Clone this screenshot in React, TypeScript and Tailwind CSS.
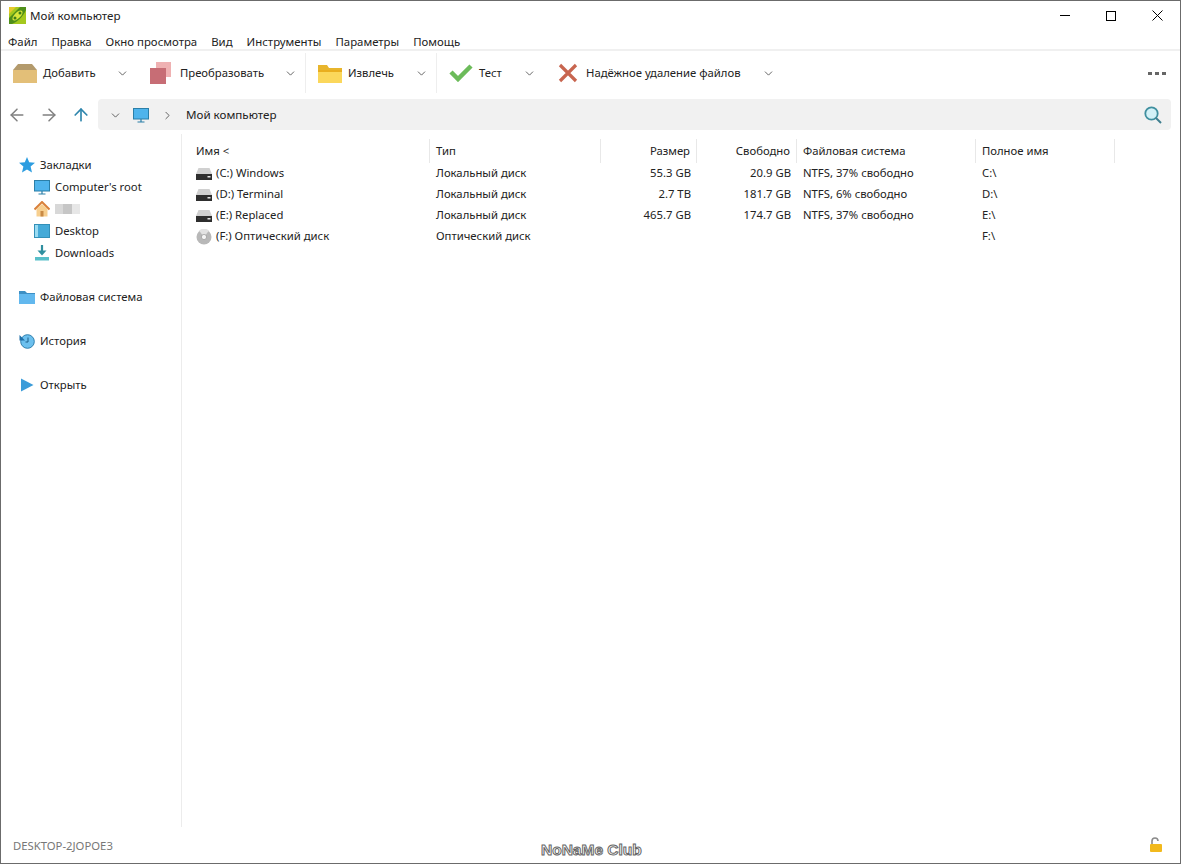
import { ArrowLeft, ArrowRight, ArrowUp, ChevronDown, ChevronRight } from "lucide-react";
import type { ReactNode } from "react";

const Pea = () => (
  <svg width="17" height="17" viewBox="0 0 17 17">
    <rect width="17" height="17" fill="#a4c81e" />
    <path d="M0 17V11L11 0h6v3C14 10 8 15 3 17z" fill="#4f8f1a" />
    <ellipse cx="8.5" cy="8.5" rx="6.5" ry="3" transform="rotate(-45 8.5 8.5)" fill="#d8e63a" />
    <circle cx="6" cy="11" r="1.5" fill="#3f7d17" />
    <circle cx="11" cy="6" r="1.5" fill="#3f7d17" />
    <path d="M0 0h7L0 7z" fill="#e6c92b" />
  </svg>
);

const BoxIcon = () => (
  <svg width="24" height="19" viewBox="0 0 24 19">
    <path d="M0 6 5 0h14l5 6z" fill="#b39a6c" />
    <rect y="6" width="24" height="13" fill="#e3bf78" />
  </svg>
);

const ConvertIcon = () => (
  <svg width="22" height="22" viewBox="0 0 22 22">
    <rect x="6" width="15" height="15" fill="#efb1b2" />
    <rect y="6" width="16" height="16" fill="#c76d75" />
  </svg>
);

const FolderIcon = () => (
  <svg width="24" height="19" viewBox="0 0 24 19">
    <path d="M0 1h9l2 3h13v3H0z" fill="#e8b52c" />
    <rect y="6" width="24" height="13" fill="#fbd75b" />
    <rect y="6" width="24" height="2" fill="#e9ae1f" />
  </svg>
);

const CheckIcon = () => (
  <svg width="24" height="18" viewBox="0 0 24 18">
    <path d="M2 8l7 7L22 2" fill="none" stroke="#6cbb5a" strokeWidth="4.5" />
  </svg>
);

const CrossIcon = () => (
  <svg width="20" height="20" viewBox="0 0 20 20">
    <path d="M2 2l16 16M18 2 2 18" fill="none" stroke="#c8654f" strokeWidth="3.2" />
  </svg>
);

const Monitor = () => (
  <svg width="16" height="16" viewBox="0 0 16 16">
    <rect x="0.5" y="1.5" width="15" height="10.5" fill="#4fb4ec" stroke="#2b7fa8" />
    <path d="M8 12v2.5M4.5 15h7" stroke="#2b7fa8" strokeWidth="1.2" />
  </svg>
);

const HomeIcon = () => (
  <svg width="16" height="16" viewBox="0 0 16 16">
    <path d="M2.5 8v7.5h11V8L8 3z" fill="#f7cf8f" />
    <path d="M0.5 8.5 8 1l7.5 7.5" fill="none" stroke="#d9803a" strokeWidth="2" />
    <rect x="6.5" y="10" width="3" height="5.5" fill="#c98a45" />
  </svg>
);

const DesktopIcon = () => (
  <svg width="16" height="14" viewBox="0 0 16 14">
    <rect x="0.5" y="0.5" width="15" height="13" fill="#45aad8" stroke="#3390b8" />
    <rect x="1" y="1" width="3" height="12" fill="#9adbf2" />
  </svg>
);

const DownloadIcon = () => (
  <svg width="16" height="16" viewBox="0 0 16 16">
    <path d="M8 0v8" stroke="#2f8f9f" strokeWidth="2.2" />
    <path d="M3.5 5.5 8 10.5l4.5-5z" fill="#2f8f9f" />
    <rect x="1" y="12" width="14" height="3.5" fill="#58bfc9" />
  </svg>
);

const StarIcon = () => (
  <svg width="16" height="16" viewBox="0 0 16 16">
    <path d="M8 0l2.2 5.3L16 5.8l-4.4 3.7L13 15.5 8 12.4l-5 3.1 1.4-6L0 5.8l5.8-.5z" fill="#2d9de0" />
  </svg>
);

const BlueFolder = () => (
  <svg width="16" height="13" viewBox="0 0 16 13">
    <path d="M0 0h6l2 2h8v2H0z" fill="#3d8fc4" />
    <rect y="3" width="16" height="10" fill="#62b8ee" />
  </svg>
);

const HistoryIcon = () => (
  <svg width="16" height="16" viewBox="0 0 16 16">
    <circle cx="8.5" cy="8.5" r="6.8" fill="#6cc0ee" stroke="#2d7fae" />
    <path d="M9 4.5V9H6.5" fill="none" stroke="#1d5f8a" />
    <path d="M0.5 2 6 7.5H0.5z" fill="#1f6fa8" />
  </svg>
);

const PlayIcon = () => (
  <svg width="16" height="16" viewBox="0 0 16 16">
    <path d="M2 1.5 14.5 8 2 14.5z" fill="#3b9cd9" />
  </svg>
);

const DriveIcon = () => (
  <svg width="16" height="12" viewBox="0 0 16 12">
    <path d="M2.5 0h11L16 6H0z" fill="#d0d0d0" />
    <rect y="6" width="16" height="6" fill="#2e2e2e" />
    <rect x="11.5" y="8" width="3" height="1.5" fill="#e5e5e5" />
  </svg>
);

const DiscIcon = () => (
  <svg width="16" height="16" viewBox="0 0 16 16">
    <circle cx="8" cy="8" r="7.5" fill="#b8b8b8" />
    <path d="M8 8 3 1.5A8 8 0 0 1 13 1.5z" fill="#e2e2e2" />
    <circle cx="8" cy="8" r="2.6" fill="#f5f5f5" stroke="#8a8a8a" strokeWidth="0.6" />
  </svg>
);

const LockIcon = () => (
  <svg width="14" height="15" viewBox="0 0 14 15" className="mb-[4px]">
    <path d="M3 7V4a3 3 0 0 1 6 0" fill="none" stroke="#8b8b8b" strokeWidth="1.6" />
    <rect x="1" y="7" width="12" height="8" rx="1" fill="#f2b91d" />
  </svg>
);

const SearchIcon = () => (
  <svg width="18" height="18" viewBox="0 0 18 18" className="ml-auto">
    <circle cx="7.5" cy="7.5" r="6.2" fill="#d3f1f7" stroke="#3f8f9f" strokeWidth="1.8" />
    <path d="M12 12l5 5" stroke="#3f7f8f" strokeWidth="2" />
  </svg>
);

const menu = ["Файл", "Правка", "Окно просмотра", "Вид", "Инструменты", "Параметры", "Помощь"];

const Tool = ({ icon, label, iconW, gap, textW }: { icon: ReactNode; label: string; iconW: string; gap: string; textW: string }) => (
  <div className="flex items-center">
    <div className={`flex justify-center ${iconW}`}>{icon}</div>
    <span className={`${gap} ${textW} whitespace-nowrap`}>{label}</span>
    <ChevronDown size={13} strokeWidth={1.5} className="ml-[20px] text-[#444]" />
  </div>
);

const Bookmark = ({ icon, children }: { icon: ReactNode; children: ReactNode }) => (
  <div className="flex h-[22px] items-center pl-[33px]">
    <div className="flex w-[16px] justify-center">{icon}</div>
    <div className="ml-[5px]">{children}</div>
  </div>
);

const Group = ({ icon, label }: { icon: ReactNode; label: string }) => (
  <div className="flex h-[22px] items-center pl-[18px]">
    <div className="flex w-[16px] justify-center">{icon}</div>
    <span className="ml-[5px]">{label}</span>
  </div>
);

const rows = [
  { icon: <DriveIcon />, name: "(C:) Windows", type: "Локальный диск", size: "55.3 GB", free: "20.9 GB", fs: "NTFS, 37% свободно", full: "C:\\" },
  { icon: <DriveIcon />, name: "(D:) Terminal", type: "Локальный диск", size: "2.7 TB", free: "181.7 GB", fs: "NTFS, 6% свободно", full: "D:\\" },
  { icon: <DriveIcon />, name: "(E:) Replaced", type: "Локальный диск", size: "465.7 GB", free: "174.7 GB", fs: "NTFS, 37% свободно", full: "E:\\" },
  { icon: <DiscIcon />, name: "(F:) Оптический диск", type: "Оптический диск", size: "", free: "", fs: "", full: "F:\\" },
];

const headCell = "flex h-[24px] items-center border-r border-[#e8e8e8] px-[6px]";

export default function App() {
  return (
    <div className="relative flex h-[864px] w-[1181px] flex-col overflow-hidden border border-[#6b6b6b] bg-white text-[11.3px] text-[#222] [font-family:'Noto_Sans',sans-serif]">
      {/* title bar */}
      <div className="flex h-[29px] shrink-0 items-center pl-[8px] text-[11.6px]">
        <Pea />
        <span className="ml-[4px]">Мой компьютер</span>
        <div className="ml-auto flex h-full items-center">
          <div className="flex w-[46px] justify-center">
            <div className="h-[1px] w-[10px] bg-black" />
          </div>
          <div className="flex w-[46px] justify-center">
            <div className="h-[10px] w-[10px] border border-black" />
          </div>
          <div className="flex w-[46px] justify-center">
            <svg width="11" height="11" viewBox="0 0 11 11">
              <path d="M.5.5l10 10M10.5.5l-10 10" stroke="#000" />
            </svg>
          </div>
        </div>
      </div>

      {/* menu */}
      <div className="flex h-[21px] shrink-0 items-center gap-[14px] border-b-2 border-[#f0f0f0] pl-[7px] pt-[5px] text-[11.4px]">
        {menu.map((m) => (
          <span key={m}>{m}</span>
        ))}
      </div>

      {/* toolbar */}
      <div className="flex h-[44px] shrink-0 items-center pl-[11px] pr-[14px]">
        <Tool icon={<BoxIcon />} label="Добавить" iconW="w-[26px]" gap="ml-[5px]" textW="w-[53px]" />
        <div className="w-[21px]" />
        <Tool icon={<ConvertIcon />} label="Преобразовать" iconW="w-[22px]" gap="ml-[8px]" textW="w-[84px]" />
        <div className="ml-[8px] h-[40px] w-px bg-[#eeeeee]" />
        <div className="w-[11px]" />
        <Tool icon={<FolderIcon />} label="Извлечь" iconW="w-[26px]" gap="ml-[5px]" textW="w-[47px]" />
        <div className="ml-[8px] h-[40px] w-px bg-[#eeeeee]" />
        <div className="w-[11px]" />
        <Tool icon={<CheckIcon />} label="Тест" iconW="w-[26px]" gap="ml-[5px]" textW="w-[24px]" />
        <div className="w-[21px]" />
        <Tool icon={<CrossIcon />} label="Надёжное удаление файлов" iconW="w-[22px]" gap="ml-[7px]" textW="w-[156px]" />
        <div className="ml-auto flex gap-[3px]">
          <div className="h-[3px] w-[4px] bg-[#666]" />
          <div className="h-[3px] w-[4px] bg-[#666]" />
          <div className="h-[3px] w-[4px] bg-[#666]" />
        </div>
      </div>

      {/* address bar */}
      <div className="mt-[4px] flex h-[31px] shrink-0 items-center pl-[6px] pr-[9px] text-[11.6px]">
        <ArrowLeft size={20} strokeWidth={1.8} className="text-[#808080]" />
        <ArrowRight size={20} strokeWidth={1.8} className="ml-[12px] text-[#808080]" />
        <ArrowUp size={20} strokeWidth={2} className="ml-[12px] text-[#2f86ad]" />
        <div className="ml-[7px] flex h-full flex-1 items-center rounded-[4px] bg-[#f1f1f1] pl-[11px] pr-[9px] pt-[1px]">
          <ChevronDown size={13} strokeWidth={1.5} className="text-[#444]" />
          <div className="ml-[11px]">
            <Monitor />
          </div>
          <ChevronRight size={13} strokeWidth={1.5} className="ml-[12px] text-[#444]" />
          <span className="ml-[12px]">Мой компьютер</span>
          <SearchIcon />
        </div>
      </div>

      <div className="flex min-h-0 flex-1 pt-[4px]">
        {/* sidebar */}
        <div className="flex h-[693px] w-[181px] shrink-0 flex-col border-r border-[#ececec] pt-[20px]">
          <Group icon={<StarIcon />} label="Закладки" />
          <Bookmark icon={<Monitor />}>Computer's root</Bookmark>
          <Bookmark icon={<HomeIcon />}>
            <div className="flex h-[10px] w-[25px] opacity-80 blur-[0.5px]">
              <div className="flex-1 bg-[#cfcfcf]" />
              <div className="flex-1 bg-[#b8b8b8]" />
              <div className="flex-1 bg-[#e2e2e2]" />
            </div>
          </Bookmark>
          <Bookmark icon={<DesktopIcon />}>Desktop</Bookmark>
          <Bookmark icon={<DownloadIcon />}>Downloads</Bookmark>
          <div className="h-[22px]" />
          <Group icon={<BlueFolder />} label="Файловая система" />
          <div className="h-[22px]" />
          <Group icon={<HistoryIcon />} label="История" />
          <div className="h-[22px]" />
          <Group icon={<PlayIcon />} label="Открыть" />
        </div>

        {/* file list */}
        <div className="grid h-fit grid-cols-[240px_171px_96px_100px_179px_139px] pl-[8px] pt-[5px]">
          <div className={headCell}>Имя &lt;</div>
          <div className={headCell}>Тип</div>
          <div className={`${headCell} justify-end`}>Размер</div>
          <div className={`${headCell} justify-end`}>Свободно</div>
          <div className={headCell}>Файловая система</div>
          <div className={headCell}>Полное имя</div>
          {rows.map((r) => (
            <div key={r.full} className="col-span-6 grid h-[21px] grid-cols-subgrid items-center">
              <div className="flex items-center px-[6px]">
                <div className="flex w-[16px] justify-center">{r.icon}</div>
                <span className="ml-[4px]">{r.name}</span>
              </div>
              <div className="px-[6px]">{r.type}</div>
              <div className="px-[6px] text-right">{r.size}</div>
              <div className="px-[6px] text-right">{r.free}</div>
              <div className="px-[6px]">{r.fs}</div>
              <div className="px-[6px]">{r.full}</div>
            </div>
          ))}
        </div>
      </div>

      {/* status */}
      <div className="flex h-[33px] shrink-0 items-center justify-between pl-[12px] pr-[17px] text-[#777]">
        <span>DESKTOP-2JOPOE3</span>
        <LockIcon />
      </div>

      <div className="absolute bottom-[4px] left-[540px] text-[15.5px] leading-[18px] font-bold text-white [-webkit-text-stroke:1px_#666] [font-family:'Liberation_Sans',sans-serif]">
        NoNaMe Club
      </div>
    </div>
  );
}
